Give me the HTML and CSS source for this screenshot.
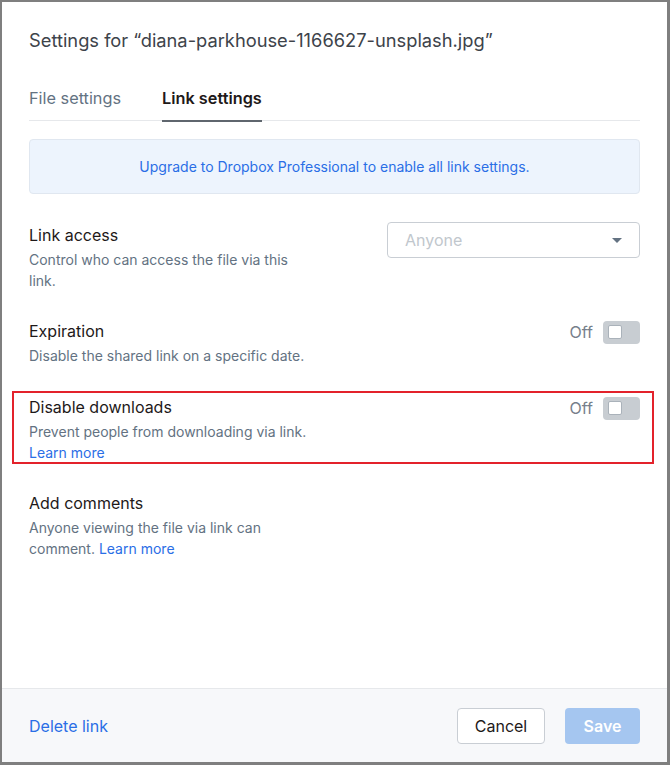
FILE: index.html
```html
<!DOCTYPE html>
<html lang="en">
<head>
<meta charset="utf-8">
<title>Settings</title>
<link rel="stylesheet" href="styles.css">
</head>
<body>
<div class="dialog">
  <div class="body">
    <h1 class="title">Settings for “diana-parkhouse-1166627-unsplash.jpg”</h1>
    <div class="tabs">
      <span class="tab">File settings</span>
      <span class="tab active">Link settings</span>
    </div>
    <div class="banner">Upgrade to Dropbox Professional to enable all link settings.</div>

    <div class="row">
      <div class="info">
        <div class="label">Link access</div>
        <div class="desc">Control who can access the file via this link.</div>
      </div>
      <div class="select">
        <span class="placeholder">Anyone</span>
        <span class="caret"></span>
      </div>
    </div>

    <div class="row">
      <div class="info">
        <div class="label">Expiration</div>
        <div class="desc">Disable the shared link on a specific date.</div>
      </div>
      <div class="control">
        <span class="state">Off</span>
        <span class="toggle"><span class="knob"></span></span>
      </div>
    </div>

    <div class="row highlighted">
      <div class="info">
        <div class="label">Disable downloads</div>
        <div class="desc"><span>Prevent people from downloading via link.</span><br><a class="link" href="#">Learn more</a></div>
      </div>
      <div class="control">
        <span class="state">Off</span>
        <span class="toggle"><span class="knob"></span></span>
      </div>
    </div>

    <div class="row">
      <div class="info">
        <div class="label">Add comments</div>
        <div class="desc"><span>Anyone viewing the file via link can</span> <span>comment.</span> <a class="link" href="#">Learn more</a></div>
      </div>
    </div>
  </div>

  <div class="footer">
    <a class="link delete" href="#">Delete link</a>
    <div class="actions">
      <button class="btn cancel">Cancel</button>
      <button class="btn save">Save</button>
    </div>
  </div>
</div>
</body>
</html>
```

FILE: styles.css
```css
html, body {
  margin: 0;
  padding: 0;
}
body {
  background: #7f7f7f;
  font-family: "Inter", "Liberation Sans", Arial, sans-serif;
  color: #1e1919;
}
.dialog {
  margin: 2px 3px 3px 2px;
  height: 760px;
  background: #ffffff;
  display: flex;
  flex-direction: column;
  box-sizing: border-box;
}
.body {
  flex: 1;
  padding: 26px 27px 0 27px;
}
.title {
  margin: 0;
  font-size: 18.3px;
  line-height: 24px;
  font-weight: normal;
  color: #3d434a;
}
.tabs {
  margin-top: 34px;
  display: flex;
  gap: 41px;
  border-bottom: 1px solid #e6e8eb;
}
.tab {
  font-size: 16.3px;
  line-height: 24px;
  padding-bottom: 10px;
  color: #637282;
  border-bottom: 2px solid transparent;
  margin-bottom: -2px;
}
.tab.active {
  font-weight: 600;
  color: #1e1919;
  border-bottom-color: #5f666e;
}
.banner {
  margin-top: 18px;
  height: 55px;
  box-sizing: border-box;
  border: 1px solid #e0e7f0;
  border-radius: 4px;
  background: #edf4fd;
  color: #2a6ee6;
  font-size: 14px;
  display: flex;
  align-items: center;
  justify-content: center;
}
.row {
  margin-top: 28px;
  display: flex;
  justify-content: space-between;
  align-items: flex-start;
  position: relative;
}
.banner + .row {
  margin-top: 29px;
}
.row.highlighted {
  margin-top: 29px;
}
.row.highlighted::after {
  content: "";
  position: absolute;
  left: -17px;
  right: -14px;
  top: -4px;
  bottom: -1px;
  border: 2px solid #e3222b;
  pointer-events: none;
}
.info {
  width: 280px;
}
.label {
  font-size: 16px;
  line-height: 24px;
  color: #1e1919;
}
.desc {
  margin-top: 2px;
  font-size: 14px;
  line-height: 21px;
  color: #637282;
}
.link {
  color: #2a6ee6;
  text-decoration: none;
}
.select {
  margin-top: -1px;
  width: 253px;
  height: 36px;
  box-sizing: border-box;
  border: 1px solid #c9ced4;
  border-radius: 4px;
  display: flex;
  align-items: center;
  justify-content: space-between;
  padding: 0 17px 0 17px;
}
.placeholder {
  font-size: 16px;
  color: #c1c7cd;
}
.caret {
  width: 0;
  height: 0;
  border-left: 5px solid transparent;
  border-right: 5px solid transparent;
  border-top: 5px solid #637282;
}
.control {
  height: 24px;
  display: flex;
  align-items: center;
  gap: 10px;
  margin-top: 1px;
}
.state {
  font-size: 16px;
  color: #76808b;
}
.toggle {
  width: 37px;
  height: 23px;
  border-radius: 4px;
  background: #c8cdd2;
  display: flex;
  align-items: center;
  padding-left: 5px;
  box-sizing: border-box;
}
.knob {
  width: 14px;
  height: 14px;
  box-sizing: border-box;
  border-radius: 2px;
  background: #ffffff;
  border: 1px solid #aab2ba;
}
.footer {
  height: 74px;
  box-sizing: border-box;
  border-top: 1px solid #e6e8eb;
  background: #f7f8fa;
  display: flex;
  align-items: center;
  justify-content: space-between;
  padding: 0 27px;
}
.delete {
  font-size: 16px;
}
.actions {
  display: flex;
  gap: 20px;
}
.btn {
  height: 36px;
  border-radius: 4px;
  font-family: inherit;
  font-size: 16px;
  padding: 0;
  cursor: pointer;
}
.cancel {
  width: 88px;
  background: #ffffff;
  border: 1px solid #c9ced4;
  color: #1e1919;
}
.save {
  width: 75px;
  background: #a5c6f0;
  border: none;
  color: #ffffff;
  font-weight: 600;
}
```
